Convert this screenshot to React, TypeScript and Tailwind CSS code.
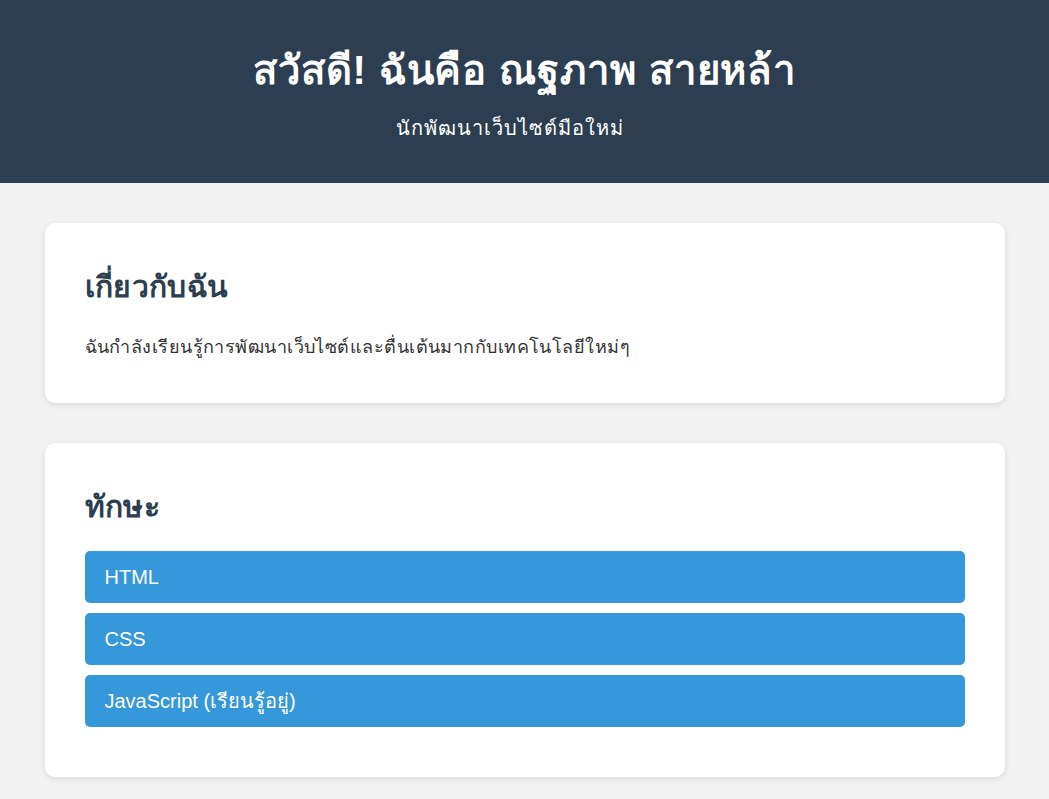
const skills = ['HTML', 'CSS', 'JavaScript (เรียนรู้อยู่)']

export default function App() {
  return (
    <div className="min-h-screen bg-[#f2f2f2] font-['Liberation_Sans','Noto_Sans',sans-serif] text-[#333]">
      <header className="bg-[#2c3e50] text-white text-center pt-10 pb-10">
        <h1 className="text-[40px] tracking-[0.9px] font-bold leading-[60px]">สวัสดี! ฉันคือ ณฐภาพ สายหล้า</h1>
        <p className="mt-[14px] text-[20px] tracking-[1px] leading-[29px] font-medium pr-[30px]">นักพัฒนาเว็บไซต์มือใหม่</p>
      </header>

      <main className="max-w-[960px] mx-auto pt-10 pb-10 flex flex-col gap-10">
        <section className="bg-white rounded-[10px] shadow-[0_2px_6px_rgba(0,0,0,0.1)] p-10">
          <h2 className="text-[30px] tracking-[0.4px] font-bold leading-[48px] text-[#2c3e50] mb-5">เกี่ยวกับฉัน</h2>
          <p className="text-[18px] tracking-[0.45px] leading-[32px]">ฉันกำลังเรียนรู้การพัฒนาเว็บไซต์และตื่นเต้นมากกับเทคโนโลยีใหม่ๆ</p>
        </section>

        <section className="bg-white rounded-[10px] shadow-[0_2px_6px_rgba(0,0,0,0.1)] p-10">
          <h2 className="text-[30px] tracking-[0.4px] font-bold leading-[48px] text-[#2c3e50] mb-5">ทักษะ</h2>
          <ul>
            {skills.map(s => (
              <li key={s} className="bg-[#3498db] text-white text-[20px] leading-[22px] py-[15px] px-5 rounded-[5px] mb-[10px]">
                {s}
              </li>
            ))}
          </ul>
        </section>
      </main>
    </div>
  )
}
